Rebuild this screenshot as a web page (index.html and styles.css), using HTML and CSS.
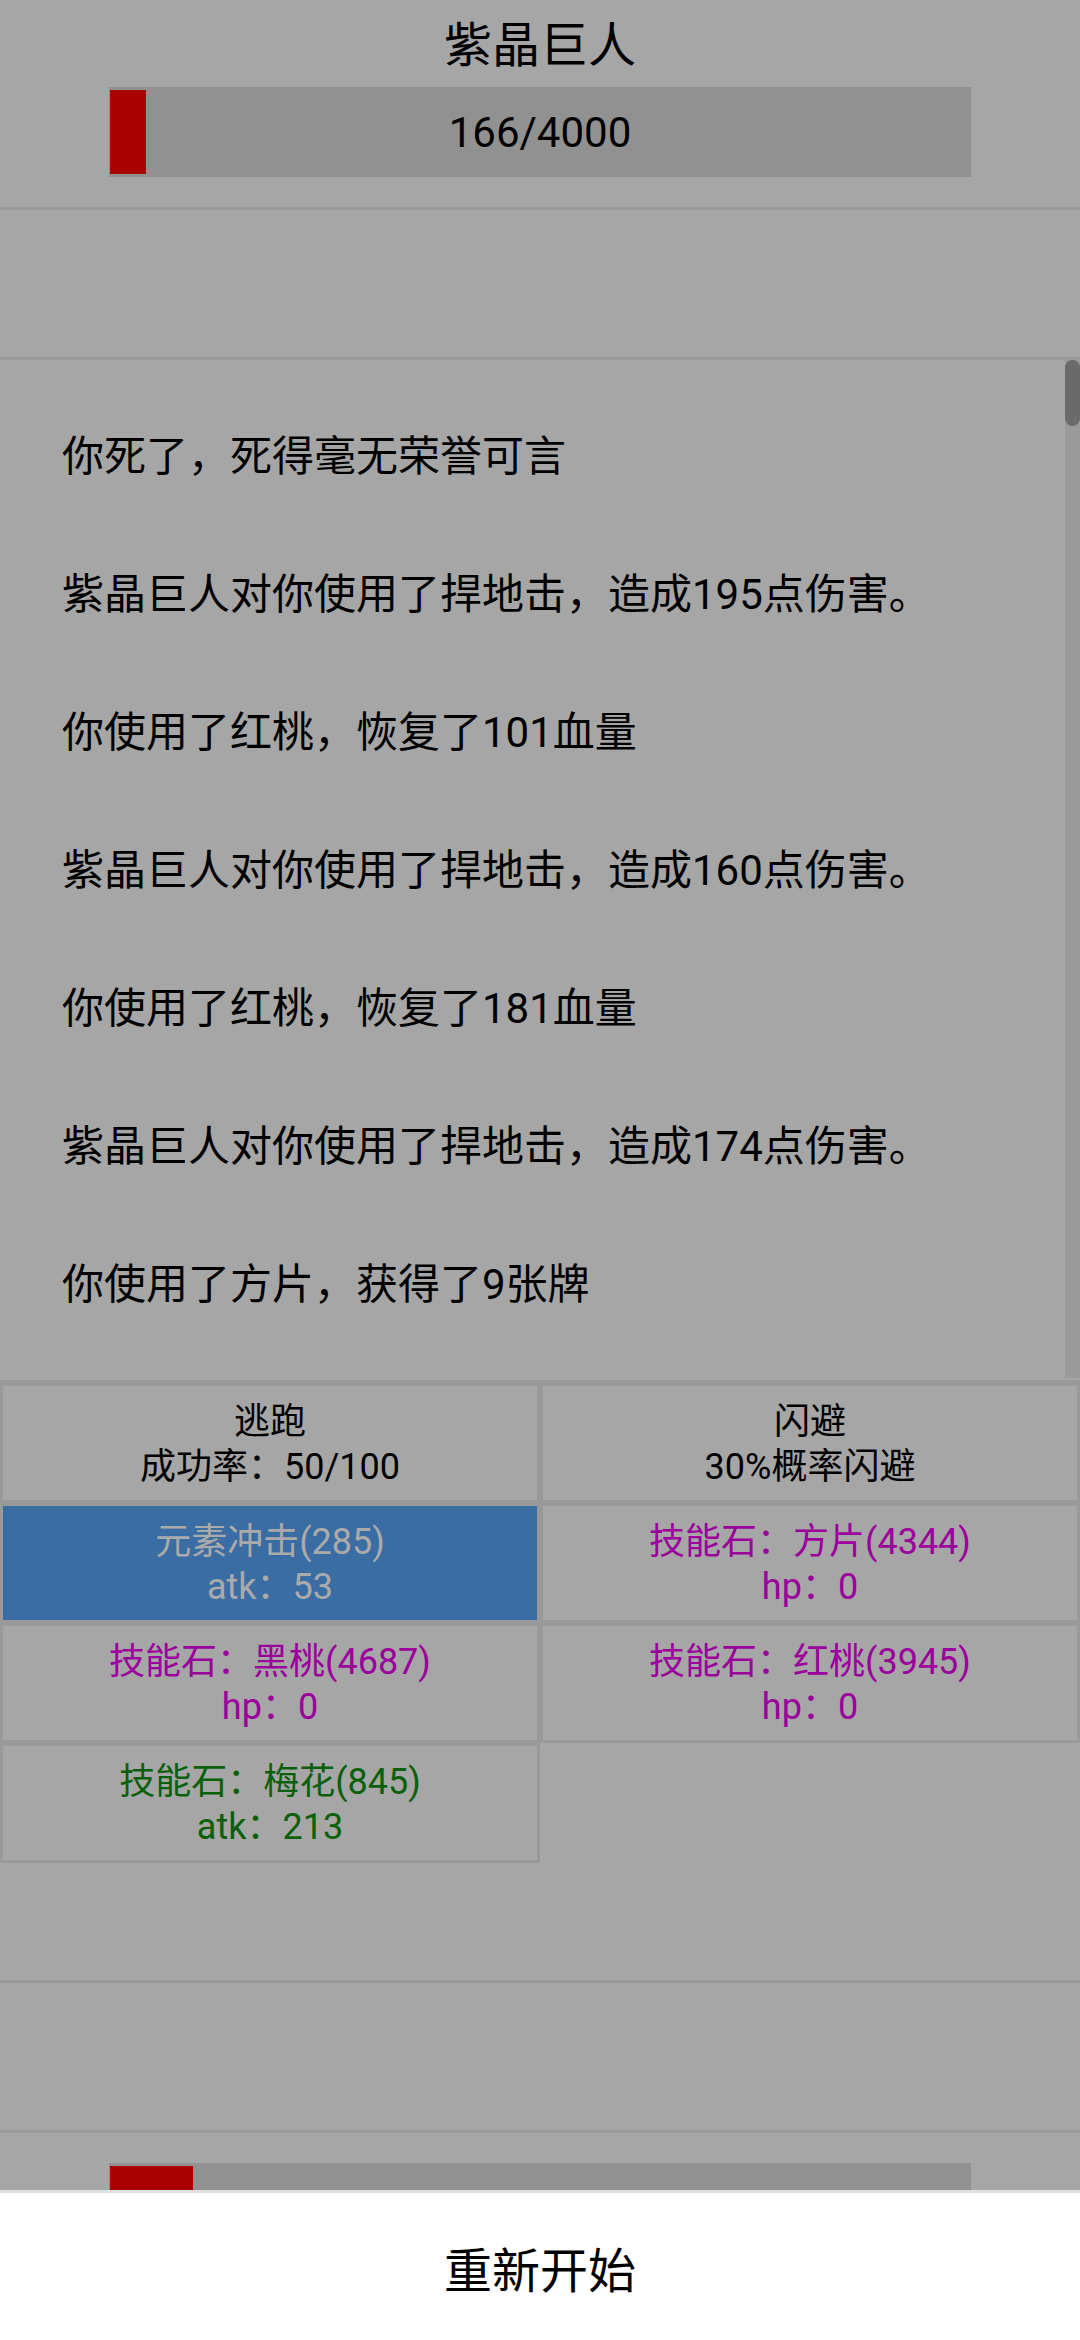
FILE: index.html
```html
<!DOCTYPE html>
<html lang="zh-CN">
<head>
<meta charset="utf-8">
<title>紫晶巨人</title>
<link rel="stylesheet" href="styles.css">
</head>
<body>
<div class="screen">
  <section class="unit enemy">
    <div class="name">紫晶巨人</div>
    <div class="hpbar">
      <div class="hpfill" style="width:4.15%"></div>
      <span class="hptext">166/4000</span>
    </div>
  </section>
  <section class="status"></section>
  <section class="log">
    <div class="log-list">
      <div class="log-item">你死了，死得毫无荣誉可言</div>
      <div class="log-item">紫晶巨人对你使用了捍地击，造成195点伤害。</div>
      <div class="log-item">你使用了红桃，恢复了101血量</div>
      <div class="log-item">紫晶巨人对你使用了捍地击，造成160点伤害。</div>
      <div class="log-item">你使用了红桃，恢复了181血量</div>
      <div class="log-item">紫晶巨人对你使用了捍地击，造成174点伤害。</div>
      <div class="log-item">你使用了方片，获得了9张牌</div>
    </div>
    <div class="scroll-track"><div class="scroll-thumb"></div></div>
  </section>
  <section class="actions">
    <div class="cell"><div class="line">逃跑</div><div class="line">成功率：50/100</div></div>
    <div class="cell"><div class="line">闪避</div><div class="line">30%概率闪避</div></div>
    <div class="cell selected"><div class="line">元素冲击(285)</div><div class="line">atk：53</div></div>
    <div class="cell purple"><div class="line">技能石：方片(4344)</div><div class="line">hp：0</div></div>
    <div class="cell purple"><div class="line">技能石：黑桃(4687)</div><div class="line">hp：0</div></div>
    <div class="cell purple"><div class="line">技能石：红桃(3945)</div><div class="line">hp：0</div></div>
    <div class="cell green"><div class="line">技能石：梅花(845)</div><div class="line">atk：213</div></div>
  </section>
  <section class="spacer"></section>
  <section class="status"></section>
  <section class="unit player">
    <div class="hpbar">
      <div class="hpfill" style="width:9.6%"></div>
    </div>
  </section>
</div>
<div class="sheet">重新开始</div>
</body>
</html>
```
FILE: styles.css
```css
html, body {
  margin: 0;
  padding: 0;
}
body {
  width: 1080px;
  height: 2340px;
  overflow: hidden;
  background: #a6a6a6;
  font-family: "Roboto", "Noto Sans CJK SC", sans-serif;
  color: #000;
}
.screen {
  display: flex;
  flex-direction: column;
  width: 1080px;
}
.unit {
  height: 207px;
  border-bottom: 3px solid #999999;
  display: flex;
  flex-direction: column;
  align-items: center;
}
.unit.player {
  border-bottom: none;
  padding-top: 30px;
}
.name {
  font-size: 48px;
  line-height: 64px;
  height: 64px;
  margin-top: 14px;
}
.enemy .hpbar {
  margin-top: 9px;
}
.hpbar {
  position: relative;
  width: 862px;
  height: 90px;
  box-sizing: border-box;
  padding: 3px 0 3px 1px;
  background: #919191;
  display: flex;
  flex-shrink: 0;
}
.hpfill {
  height: 100%;
  background: #aa0000;
}
.hptext {
  position: absolute;
  left: 0;
  right: 0;
  top: 0;
  bottom: 0;
  display: flex;
  align-items: center;
  justify-content: center;
  font-size: 42px;
}
.status {
  height: 147px;
  border-bottom: 3px solid #999999;
}
.log {
  height: 1020px;
  border-bottom: 3px solid #999999;
  display: flex;
}
.log-list {
  flex: 1;
  padding-top: 28px;
}
.log-item {
  height: 138px;
  line-height: 138px;
  font-size: 42px;
  padding-left: 62px;
  white-space: nowrap;
}
.scroll-track {
  width: 15px;
  height: 1018px;
  background: #9b9b9b;
}
.scroll-thumb {
  width: 15px;
  height: 66px;
  border-radius: 8px;
  background: #6a6a6a;
}
.actions {
  display: grid;
  grid-template-columns: 540px 540px;
  grid-auto-rows: 120px;
}
.cell {
  box-sizing: border-box;
  border: 3px solid #999999;
  display: flex;
  flex-direction: column;
  align-items: center;
  justify-content: center;
  font-size: 36px;
  padding-top: 4px;
  color: #000;
}
.line {
  height: 45px;
  line-height: 45px;
  white-space: nowrap;
}
.cell.selected {
  background: #3a6da4;
  color: #aaaaaa;
}
.cell.purple {
  color: #9c009c;
}
.cell.green {
  color: #0a5f0a;
}
.spacer {
  height: 117px;
  border-bottom: 3px solid #999999;
}
.sheet {
  position: fixed;
  left: 0;
  right: 0;
  bottom: 0;
  height: 147px;
  border-top: 3px solid #e0e0e0;
  background: #ffffff;
  display: flex;
  align-items: center;
  justify-content: center;
  font-size: 48px;
  color: #000;
}
```
